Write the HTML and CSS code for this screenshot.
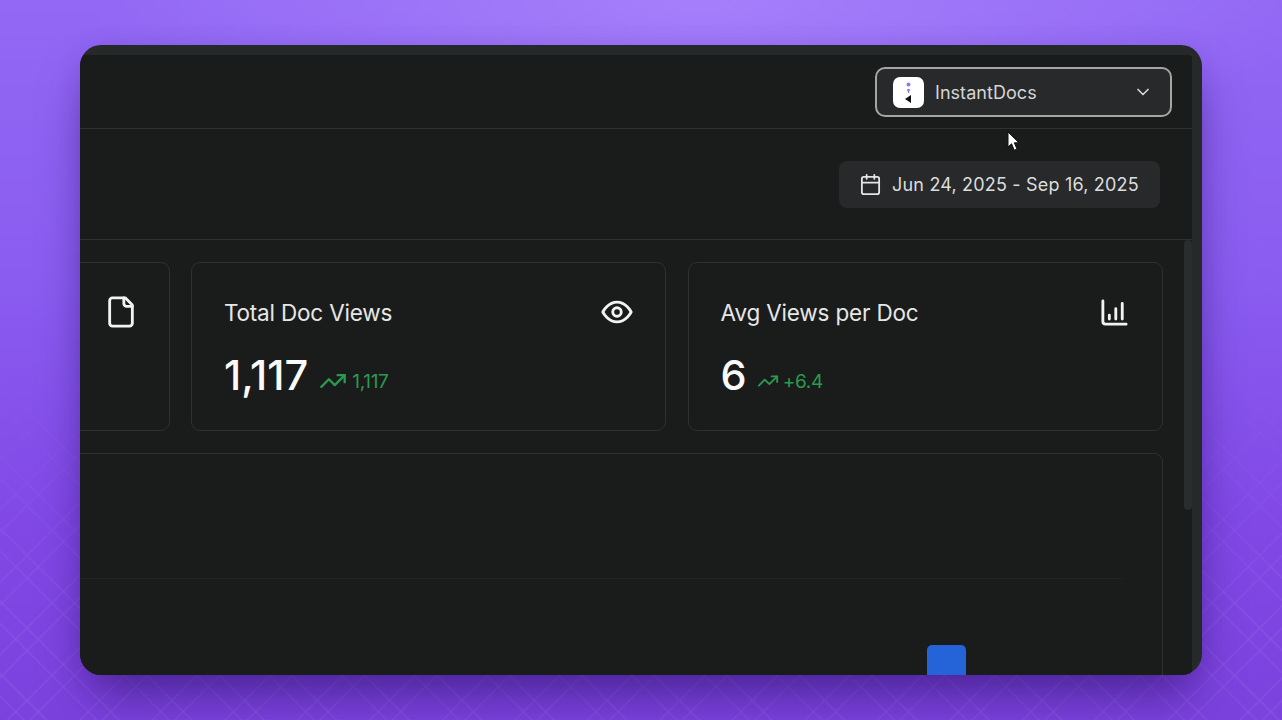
FILE: index.html
```html
<!DOCTYPE html>
<html lang="en">
<head>
<meta charset="utf-8">
<title>InstantDocs analytics</title>
<link rel="stylesheet" href="styles.css">
</head>
<body>
<svg class="backdrop" width="1282" height="720" aria-hidden="true">
  <defs>
    <pattern id="plaid" patternUnits="userSpaceOnUse" width="51.27" height="51.27" patternTransform="rotate(45)">
      <path d="M17.64 0V51.27M1.73 0V51.27M0 14.8H51.27M0 30.7H51.27" fill="none" stroke="#fff" stroke-width="1.3"/>
    </pattern>
  </defs>
  <rect width="1282" height="720" fill="url(#plaid)"/>
</svg>
<main class="window">
  <div class="frame">
    <header class="topbar">
      <div class="workspace">
        <span class="logo">
          <svg width="31" height="31" viewBox="0 0 31 31"><circle cx="15.5" cy="7.5" r="2" fill="#8a7cf0"/><path d="M14 13h3M15.5 12v4" stroke="#8a7cf0" stroke-width="1.4"/><path d="M18 18v8l-6-4z" fill="#111"/></svg>
        </span>
        <span class="workspace-name">InstantDocs</span>
        <svg class="chevron" width="20" height="20" viewBox="0 0 24 24"><path d="m6 9 6 6 6-6"/></svg>
      </div>
    </header>
    <div class="toolbar">
      <div class="date-range">
        <svg class="line-icon" width="23" height="23" viewBox="0 0 24 24"><path d="M8 2v4M16 2v4"/><rect x="3" y="4" width="18" height="18" rx="2"/><path d="M3 10h18"/></svg>
        <span>Jun 24, 2025 - Sep 16, 2025</span>
      </div>
    </div>
    <div class="body">
      <div class="content">
        <div class="cards">
          <section class="card">
            <div class="card-head card-head-end">
              <svg class="line-icon stat-icon" viewBox="0 0 24 24"><path d="M15 2H6a2 2 0 0 0-2 2v16a2 2 0 0 0 2 2h12a2 2 0 0 0 2-2V7Z"/><path d="M14 2v4a2 2 0 0 0 2 2h4"/></svg>
            </div>
          </section>
          <section class="card">
            <div class="card-head">
              <h2 class="card-title">Total Doc Views</h2>
              <svg class="line-icon stat-icon" viewBox="0 0 24 24"><path d="M2 12s3.5-7 10-7 10 7 10 7-3.5 7-10 7-10-7-10-7Z"/><circle cx="12" cy="12" r="3"/></svg>
            </div>
            <div class="card-value">
              <span class="value">1,117</span>
              <span class="trend">
                <svg class="trend-icon" width="28" height="28" viewBox="0 0 24 24"><path d="m22 7-8.5 8.5-5-5L2 17"/><path d="M16 7h6v6"/></svg>
                <span class="trend-text">1,117</span>
              </span>
            </div>
          </section>
          <section class="card">
            <div class="card-head">
              <h2 class="card-title">Avg Views per Doc</h2>
              <svg class="line-icon chart-icon" viewBox="0 0 24 24"><path d="M3 3v16a2 2 0 0 0 2 2h16"/><path d="M8 17v-3M13 17V9M18 17V5"/></svg>
            </div>
            <div class="card-value">
              <span class="value">6</span>
              <span class="trend trend-small">
                <svg class="trend-icon" width="22" height="22" viewBox="0 0 24 24"><path d="m22 7-8.5 8.5-5-5L2 17"/><path d="M16 7h6v6"/></svg>
                <span class="trend-text">+6.4</span>
              </span>
            </div>
          </section>
        </div>
        <div class="chart-row">
          <section class="chart">
            <div class="gridline"></div>
            <div class="bar"></div>
          </section>
        </div>
      </div>
      <div class="scrollbar"><div class="thumb"></div></div>
    </div>
  </div>
  <svg class="cursor" width="14" height="21" viewBox="0 0 14 21"><path d="M1 1v15l3.6-3.2 2.6 6.4 2.8-1.2-2.7-6.2H12Z" fill="#fff" stroke="#111" stroke-width="1"/></svg>
</main>
</body>
</html>
```
FILE: styles.css
```css
* { box-sizing: border-box; }

html, body { margin: 0; height: 100%; }

body {
  position: relative;
  width: 1282px;
  height: 720px;
  padding: 45px 80px;
  overflow: hidden;
  font-family: Inter, "Liberation Sans", sans-serif;
  background:
    radial-gradient(ellipse 620px 160px at 700px 0, #a57ffb 0%, rgba(165, 127, 251, 0) 100%),
    linear-gradient(180deg, #9268f4 0%, #8a5cf0 40%, #8148e6 72%, #7c42de 100%);
}

.backdrop {
  position: absolute;
  inset: 0;
  opacity: 0.07;
  -webkit-mask-image: linear-gradient(180deg, transparent 50%, #000 85%);
  mask-image: linear-gradient(180deg, transparent 50%, #000 85%);
}

.window {
  position: relative;
  width: 1122px;
  height: 630px;
  padding: 10px 10px 0 0;
  overflow: hidden;
  background: #262929;
  border-radius: 21px;
  box-shadow: 0 28px 48px -10px rgba(40, 15, 100, 0.6), 0 0 24px rgba(50, 20, 120, 0.08);
}

.frame {
  display: flex;
  flex-direction: column;
  height: 100%;
  background: #1a1c1b;
  border-top-right-radius: 4px;
}

.topbar {
  display: flex;
  justify-content: flex-end;
  flex: none;
  height: 74px;
  padding: 12px 20px 0 0;
  border-bottom: 1px solid #2e3031;
}

.workspace {
  display: flex;
  align-items: center;
  width: 297px;
  height: 50px;
  padding: 0 17px 0 16px;
  background: #27292a;
  border: 2px solid #a3a6a6;
  border-radius: 10px;
}

.logo {
  display: flex;
  flex: none;
  width: 31px;
  height: 31px;
  background: #fff;
  border-radius: 7px;
}

.workspace-name {
  margin-left: 11px;
  font-size: 18px;
  letter-spacing: 0.05px;
  color: #d4d6d6;
}

.chevron {
  margin-left: auto;
  fill: none;
  stroke: #d4d6d6;
  stroke-width: 2;
  stroke-linecap: round;
  stroke-linejoin: round;
}

.toolbar {
  display: flex;
  justify-content: flex-end;
  flex: none;
  height: 111px;
  padding: 32px 32px 0 0;
  border-bottom: 1px solid #2e3031;
}

.date-range {
  display: flex;
  align-items: center;
  gap: 10px;
  width: 321px;
  height: 47px;
  padding: 0 20px;
  font-size: 18px;
  letter-spacing: 0.19px;
  color: #dcdddd;
  background: #27292a;
  border-radius: 8px;
}

.line-icon {
  flex: none;
  fill: none;
  stroke: #e4e5e5;
  stroke-width: 1.9;
  stroke-linecap: round;
  stroke-linejoin: round;
}

.body {
  display: flex;
  flex: 1;
  min-height: 0;
}

.content {
  display: flex;
  flex: 1;
  flex-direction: column;
  gap: 22px;
  min-width: 0;
  padding: 22px 21px 0 0;
  overflow: hidden;
}

.cards {
  display: flex;
  justify-content: flex-end;
  gap: 21.3px;
  flex: none;
}

.card {
  flex: none;
  width: 475.4px;
  height: 169px;
  padding: 32px 31px 0 32px;
  border: 1px solid #2e3031;
  border-radius: 9px;
}

.card-head {
  display: flex;
  align-items: center;
  justify-content: space-between;
  height: 34px;
}

.card-head-end { justify-content: flex-end; }

.card-title {
  margin: 0;
  font-size: 22.5px;
  font-weight: 400;
  letter-spacing: -0.18px;
  color: #e6e7e7;
}

.stat-icon {
  width: 34px;
  height: 34px;
  stroke: #f2f2f2;
  stroke-width: 2;
}

.chart-icon {
  width: 31px;
  height: 31px;
  margin-right: 1px;
  stroke: #f2f2f2;
  stroke-width: 2.2;
}

.card-value {
  display: flex;
  align-items: center;
  gap: 11px;
  margin-top: 22px;
}

.value {
  font-size: 41.5px;
  font-weight: 500;
  line-height: 48px;
  color: #fafafa;
}

.trend {
  display: flex;
  align-items: center;
  gap: 5px;
  margin-top: 12px;
  color: #2a9a50;
}

.trend-small {
  gap: 4px;
  margin-left: -1px;
}

.trend-icon {
  fill: none;
  stroke: currentColor;
  stroke-width: 2;
  stroke-linecap: round;
  stroke-linejoin: round;
}

.trend-text {
  font-size: 19px;
  letter-spacing: -0.3px;
}

.chart-row {
  display: flex;
  justify-content: flex-end;
  flex: none;
}

.chart {
  display: flex;
  flex: none;
  flex-direction: column;
  width: 1300px;
  height: 400px;
  padding-top: 124px;
  border: 1px solid #2e3031;
  border-radius: 9px;
}

.gridline {
  flex: none;
  height: 1px;
  margin-right: 40px;
  background: #232524;
}

.bar {
  flex: none;
  align-self: flex-end;
  width: 39px;
  height: 60px;
  margin: 66px 196px 0 0;
  background: #2563d9;
  border-radius: 5px 5px 0 0;
}

.scrollbar {
  flex: none;
  width: 8px;
}

.thumb {
  height: 270px;
  background: #2a2c2d;
  border-radius: 4px;
}

.cursor {
  position: absolute;
  left: 927px;
  top: 86px;
}
```
